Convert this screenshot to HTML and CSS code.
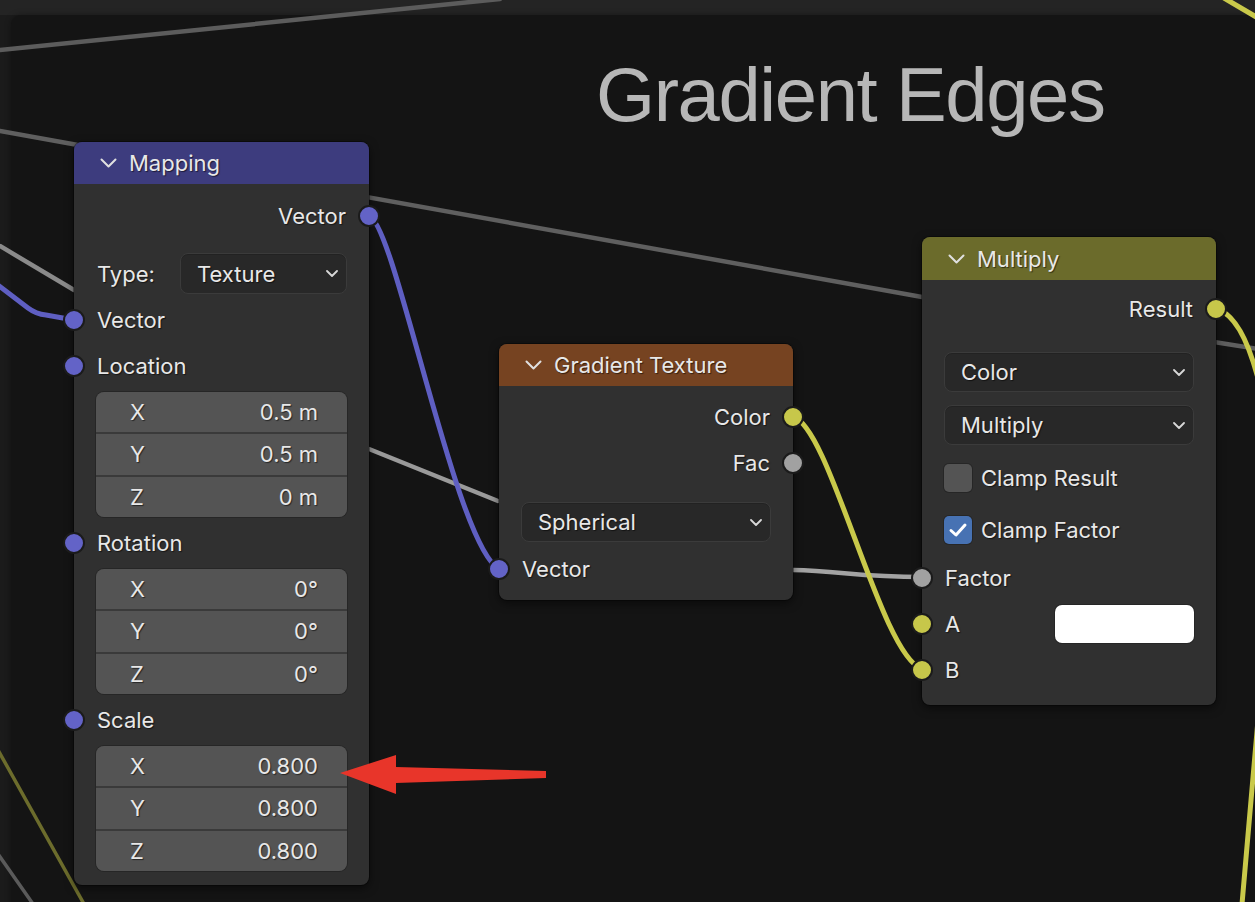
FILE: index.html
```html
<!DOCTYPE html>
<html>
<head>
<meta charset="utf-8">
<link rel="stylesheet" href="styles.css">
</head>
<body>
<div class="editor">
  <div class="frame">
    <div class="frame-title">Gradient Edges</div>
  </div>

  <svg class="wires" width="1255" height="902" viewBox="0 0 1255 902">
    <path class="w-gray" d="M0,50 L500,-1" stroke="#5c5c5c"/>
    <path class="w-gray" d="M0,131 L922,297" stroke="#5f5f5f"/>
    <path class="w-gray" d="M1214,342 L1258,349" stroke="#5f5f5f"/>
    <path class="w-gray" d="M0,246 L74,290" stroke="#8a8a8a"/>
    <path class="w-gray" d="M369,449 L498,501" stroke="#9a9a9a"/>
    <path class="w-gray" d="M793,570 C840,571 860,577 922,577" stroke="#a3a3a3"/>
    <path class="w-col" d="M-2,285 L28,308 Q36,314 46,315 L74,320" stroke="#5f5fc2"/>
    <path class="w-col" d="M369,216 C395,222 455,545 499,569" stroke="#5f5fc2"/>
    <path class="w-col" d="M793,417 C830,425 880,655 922,669" stroke="#c9c94a"/>
    <path class="w-col" d="M1216,309 C1238,314 1252,350 1262,395" stroke="#c9c94a"/>
    <path class="w-col" d="M1242,904 L1258,720" stroke="#c9c94a"/>
    <path class="w-thin" d="M-2,750 L84,904" stroke="#6c6c2c"/>
    <path class="w-thin" d="M-2,854 L33,904" stroke="#5a5a5a"/>
    <path class="w-col" d="M1224,-2 L1258,18" stroke="#c9c94a"/>
  </svg>

  <!-- Mapping node -->
  <div class="node node-mapping">
    <div class="node-header hdr-vector">
      <svg class="chev" width="17" height="10" viewBox="0 0 17 10"><polyline points="1.5,1.5 8.5,8.5 15.5,1.5"/></svg>
      <span>Mapping</span>
    </div>
    <div class="node-body body-mapping">
      <div class="row out"><span>Vector</span><i class="socket s-vec"></i></div>
      <div class="row prop type-row">
        <span>Type:</span>
        <div class="dropdown dd-type"><span>Texture</span><svg class="dchev" width="12" height="7" viewBox="0 0 12 7"><polyline points="1,1 6,6 11,1"/></svg></div>
      </div>
      <div class="row in"><i class="socket s-vec"></i><span>Vector</span></div>
      <div class="row in"><i class="socket s-vec"></i><span>Location</span></div>
      <div class="vbox">
        <div class="vrow"><span>X</span><span>0.5 m</span></div>
        <div class="vrow"><span>Y</span><span>0.5 m</span></div>
        <div class="vrow"><span>Z</span><span>0 m</span></div>
      </div>
      <div class="row in"><i class="socket s-vec"></i><span>Rotation</span></div>
      <div class="vbox">
        <div class="vrow"><span>X</span><span>0°</span></div>
        <div class="vrow"><span>Y</span><span>0°</span></div>
        <div class="vrow"><span>Z</span><span>0°</span></div>
      </div>
      <div class="row in"><i class="socket s-vec"></i><span>Scale</span></div>
      <div class="vbox">
        <div class="vrow"><span>X</span><span>0.800</span></div>
        <div class="vrow"><span>Y</span><span>0.800</span></div>
        <div class="vrow"><span>Z</span><span>0.800</span></div>
      </div>
    </div>
  </div>

  <!-- Gradient Texture node -->
  <div class="node node-gradient">
    <div class="node-header hdr-texture">
      <svg class="chev" width="17" height="10" viewBox="0 0 17 10"><polyline points="1.5,1.5 8.5,8.5 15.5,1.5"/></svg>
      <span>Gradient Texture</span>
    </div>
    <div class="node-body body-gradient">
      <div class="row out"><span>Color</span><i class="socket s-col"></i></div>
      <div class="row out"><span>Fac</span><i class="socket s-flt"></i></div>
      <div class="dd-wrap dd-spherical">
        <div class="dropdown"><span>Spherical</span><svg class="dchev" width="12" height="7" viewBox="0 0 12 7"><polyline points="1,1 6,6 11,1"/></svg></div>
      </div>
      <div class="row in"><i class="socket s-vec"></i><span>Vector</span></div>
    </div>
  </div>

  <!-- Multiply node -->
  <div class="node node-multiply">
    <div class="node-header hdr-color">
      <svg class="chev" width="17" height="10" viewBox="0 0 17 10"><polyline points="1.5,1.5 8.5,8.5 15.5,1.5"/></svg>
      <span>Multiply</span>
    </div>
    <div class="node-body body-multiply">
      <div class="row out"><span>Result</span><i class="socket s-col"></i></div>
      <div class="dd-wrap dd-first">
        <div class="dropdown"><span>Color</span><svg class="dchev" width="12" height="7" viewBox="0 0 12 7"><polyline points="1,1 6,6 11,1"/></svg></div>
      </div>
      <div class="dd-wrap dd-second">
        <div class="dropdown"><span>Multiply</span><svg class="dchev" width="12" height="7" viewBox="0 0 12 7"><polyline points="1,1 6,6 11,1"/></svg></div>
      </div>
      <div class="row check-row first-check"><span class="checkbox"></span><span>Clamp Result</span></div>
      <div class="row check-row"><span class="checkbox checked"><svg width="20" height="16" viewBox="0 0 20 16"><polyline points="3,8.5 8,13 17,3"/></svg></span><span>Clamp Factor</span></div>
      <div class="row in factor-row"><i class="socket s-flt"></i><span>Factor</span></div>
      <div class="row in"><i class="socket s-col"></i><span>A</span><span class="swatch"></span></div>
      <div class="row in"><i class="socket s-col"></i><span>B</span></div>
    </div>
  </div>

  <svg class="arrow" width="1255" height="902" viewBox="0 0 1255 902">
    <polygon points="340,773 396,755 396,767 546,771 546,778 396,783 396,794" fill="#e8352a"/>
  </svg>
</div>
</body>
</html>
```

FILE: styles.css
```css
* { box-sizing: border-box; }

body {
  margin: 0;
  background: #1e1e1e;
  font-family: Inter, "Noto Sans", "DejaVu Sans", sans-serif;
  overflow: hidden;
}

.editor {
  position: relative;
  width: 1255px;
  height: 902px;
  overflow: hidden;
  background: linear-gradient(#242424 0, #242424 15px, #1b1b1b 15px);
}

.frame {
  position: absolute;
  left: 11px;
  top: 15px;
  width: 1400px;
  height: 1000px;
  background: #141414;
  border-radius: 10px;
  box-shadow: 0 0 6px rgba(0, 0, 0, 0.35);
}

.frame-title {
  padding: 42px 0 0 585px;
  font-family: "Liberation Sans", Arial, sans-serif;
  font-size: 76px;
  line-height: 76px;
  letter-spacing: -1.4px;
  color: #b7b7b7;
  white-space: nowrap;
}

.wires, .arrow {
  position: absolute;
  left: 0;
  top: 0;
}

.wires path { fill: none; stroke-linecap: round; }
.w-gray { stroke-width: 4.5; }
.w-col { stroke-width: 5; }
.w-thin { stroke-width: 3.5; }

.arrow { z-index: 5; }

.node {
  position: absolute;
  width: 295px;
  background: #303030;
  border-radius: 8px;
  box-shadow: 0 3px 10px rgba(0, 0, 0, 0.55), 0 0 0 1px rgba(0, 0, 0, 0.35);
  color: #e8e8e8;
  font-size: 22px;
  text-shadow: 1px 1px 1px rgba(0, 0, 0, 0.55);
  z-index: 2;
}

.node-mapping { left: 74px; top: 142px; }
.node-gradient { left: 499px; top: 344px; width: 294px; }
.node-multiply { left: 922px; top: 237px; width: 294px; }

.node-header {
  height: 42px;
  border-radius: 8px 8px 0 0;
  display: flex;
  align-items: center;
  gap: 12px;
  padding-left: 26px;
  white-space: nowrap;
}

.hdr-vector { background: #3d3c7e; }
.hdr-texture { background: #764321; }
.hdr-color { background: #6b6b2b; height: 43px; }

.chev polyline, .dchev polyline {
  fill: none;
  stroke: #e0e0e0;
  stroke-width: 2;
  stroke-linecap: round;
  stroke-linejoin: round;
}
.dchev polyline { stroke: #d8d8d8; stroke-width: 1.8; }

.node-body { display: flex; flex-direction: column; }
.body-mapping { padding: 9px 0 11px; }
.body-gradient { padding: 8px 0 8px; }
.body-multiply { padding: 6px 0 12px; }

.row {
  position: relative;
  height: 46px;
  flex: none;
  display: flex;
  align-items: center;
  padding: 0 23px;
  white-space: nowrap;
}
.row.out { justify-content: flex-end; }

.socket {
  position: absolute;
  top: 50%;
  left: 0;
  width: 22px;
  height: 22px;
  margin: -11px 0 0 -11px;
  border-radius: 50%;
  border: 2px solid #1b1b1b;
}
.row.out .socket { left: 100%; }
.s-vec { background: #6363c7; }
.s-col { background: #c7c74a; }
.s-flt { background: #a1a1a1; }

.type-row {
  height: 41px;
  margin: 14px 0 3px;
  padding: 0 22px 0 23px;
  justify-content: space-between;
}

.dropdown {
  height: 41px;
  border-radius: 8px;
  background: #282828;
  border: 1px solid #3b3b3b;
  display: flex;
  align-items: center;
  justify-content: space-between;
  padding: 0 8px 0 16px;
  box-shadow: inset 0 1px 0 rgba(0,0,0,0.15);
}
.dd-type { width: 167px; }

.dd-wrap { padding: 0 22px; }
.dd-spherical { margin: 16px 0 4px; }
.dd-spherical .dropdown { height: 40px; }
.dd-first { margin-top: 20px; }
.dd-first .dropdown, .dd-second .dropdown { height: 40px; }
.dd-second { margin-top: 13px; }

.vbox {
  margin: 3px 22px;
  height: 125px;
  border-radius: 8px;
  background: #3a3a3a;
  box-shadow: 0 0 0 1px #262626;
  display: flex;
  flex-direction: column;
  gap: 2px;
  overflow: hidden;
}

.vrow {
  flex: 1;
  background: #545454;
  display: flex;
  justify-content: space-between;
  align-items: center;
  padding: 0 29px 0 34px;
}

.check-row {
  padding-left: 22px;
  gap: 9px;
}
.first-check { margin-top: 10px; }
.check-row + .check-row { margin-top: 6px; }

.checkbox {
  width: 28px;
  height: 28px;
  border-radius: 5px;
  background: #545454;
  box-shadow: 0 0 0 1px #262626;
  display: flex;
  align-items: center;
  justify-content: center;
}
.checkbox.checked { background: #4772b3; }
.checkbox svg polyline {
  fill: none;
  stroke: #ffffff;
  stroke-width: 3;
  stroke-linecap: round;
  stroke-linejoin: round;
}

.factor-row { margin-top: 2px; }

.swatch {
  margin-left: auto;
  margin-right: -1px;
  width: 139px;
  height: 38px;
  border-radius: 7px;
  background: #ffffff;
  box-shadow: 0 0 0 1px #262626;
}
```
